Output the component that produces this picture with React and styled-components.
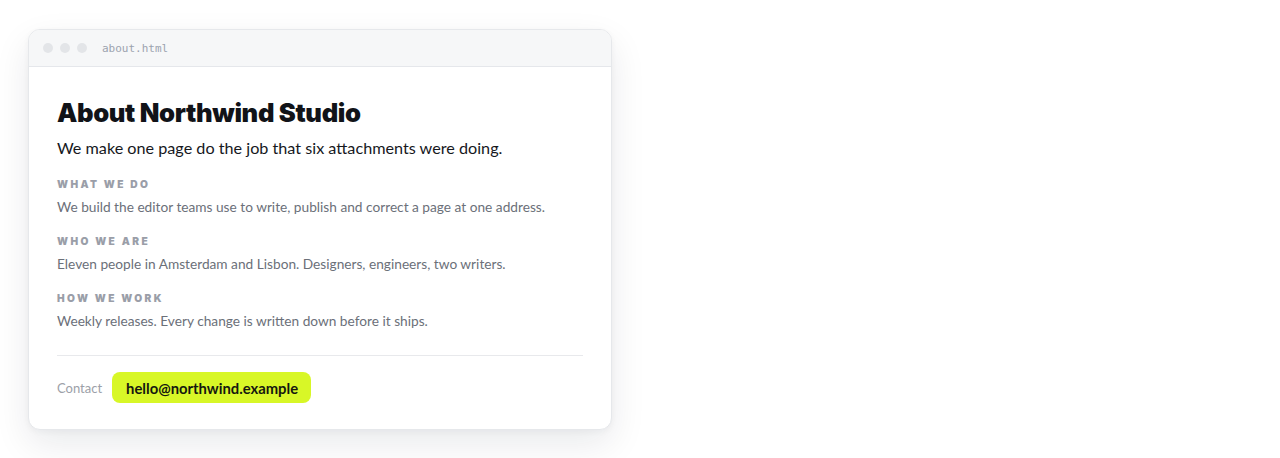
import React from "react";
import styled, { createGlobalStyle } from "styled-components";

const GlobalStyle = createGlobalStyle`
  html, body {
    margin: 0;
    padding: 0;
    background: #ffffff;
  }
  body {
    font-family: Lato, "Open Sans", sans-serif;
  }
`;

const Page = styled.div`
  padding: 29px 0 0 28px;
  width: 1280px;
  height: 458px;
  box-sizing: border-box;
`;

const Window = styled.div`
  width: 584px;
  background: #ffffff;
  border: 1px solid #e6e8eb;
  border-radius: 12px;
  box-sizing: border-box;
  overflow: hidden;
  box-shadow: 0 14px 36px rgba(15, 23, 42, 0.09), 0 2px 6px rgba(15, 23, 42, 0.04);
`;

const TitleBar = styled.div`
  height: 37px;
  display: flex;
  align-items: center;
  gap: 7px;
  padding: 0 14px;
  background: #f6f7f8;
  border-bottom: 1px solid #e5e7eb;
  box-sizing: border-box;
`;

const Dot = styled.span`
  width: 10px;
  height: 10px;
  border-radius: 50%;
  background: #e3e5e8;
`;

const FileName = styled.span`
  margin-left: 8px;
  font-family: "DejaVu Sans Mono", "Liberation Mono", monospace;
  font-size: 11px;
  color: #9ca3af;
`;

const Body = styled.div`
  padding: 29px 28px 26px 28px;
`;

const Heading = styled.h1`
  margin: 0;
  font-family: Inter, Lato, sans-serif;
  font-weight: 900;
  font-size: 25.6px;
  line-height: 34px;
  color: #111318;
  letter-spacing: -0.35px;
`;

const Lead = styled.p`
  margin: 6px 0 17px;
  font-family: Lato, sans-serif;
  font-size: 16.2px;
  line-height: 24px;
  color: #16181d;
`;

const Section = styled.section`
  margin-top: 16px;
`;

const Label = styled.h3`
  margin: 0;
  font-family: Inter, Lato, sans-serif;
  font-weight: 900;
  font-size: 10.2px;
  line-height: 14px;
  letter-spacing: 2.4px;
  text-transform: uppercase;
  color: #9a9ea8;
`;

const Text = styled.p`
  margin: 5px 0 0;
  font-family: Lato, sans-serif;
  font-size: 13.7px;
  line-height: 22px;
  color: #6b7079;
`;

const Rule = styled.hr`
  margin: 23px 0 0;
  border: 0;
  border-top: 1px solid #e8e9ec;
`;

const ContactRow = styled.div`
  margin-top: 16px;
  display: flex;
  align-items: center;
  gap: 10px;
`;

const ContactLabel = styled.span`
  font-family: Lato, sans-serif;
  font-size: 13px;
  color: #9ca0a8;
`;

const Email = styled.a`
  display: inline-flex;
  align-items: center;
  height: 31px;
  padding: 0 13px 0 14px;
  border-radius: 8px;
  background: #d8f727;
  font-family: Lato, sans-serif;
  font-weight: 700;
  font-size: 14.8px;
  color: #15170f;
  text-decoration: none;
`;

const sections = [
  {
    label: "What we do",
    text: "We build the editor teams use to write, publish and correct a page at one address.",
  },
  {
    label: "Who we are",
    text: "Eleven people in Amsterdam and Lisbon. Designers, engineers, two writers.",
  },
  {
    label: "How we work",
    text: "Weekly releases. Every change is written down before it ships.",
  },
];

export default function App() {
  return (
    <Page>
      <GlobalStyle />
      <Window>
        <TitleBar>
          <Dot />
          <Dot />
          <Dot />
          <FileName>about.html</FileName>
        </TitleBar>
        <Body>
          <Heading>About Northwind Studio</Heading>
          <Lead>We make one page do the job that six attachments were doing.</Lead>
          {sections.map((s) => (
            <Section key={s.label}>
              <Label>{s.label}</Label>
              <Text>{s.text}</Text>
            </Section>
          ))}
          <Rule />
          <ContactRow>
            <ContactLabel>Contact</ContactLabel>
            <Email href="#">hello@northwind.example</Email>
          </ContactRow>
        </Body>
      </Window>
    </Page>
  );
}
